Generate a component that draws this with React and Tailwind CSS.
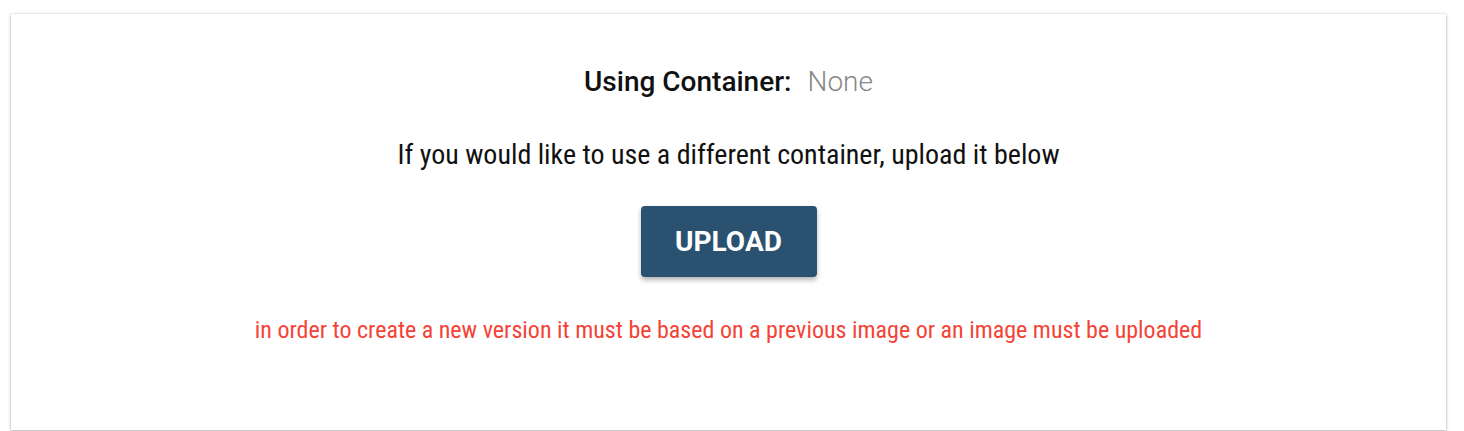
import React from 'react';

const App = () => {
    return (
        <div className="pl-[11px] pt-[14px] pb-px bg-white min-h-[431px]" style={{ fontFamily: 'Roboto, sans-serif' }}>
            <div className="w-[1435px] h-[416px] bg-white shadow-[0_1px_3px_rgba(0,0,0,0.3),0_0_2px_rgba(0,0,0,0.12)] flex flex-col items-center">
                <div className="mt-[52px] flex items-baseline text-[28px] leading-[32px]">
                    <span className="font-medium text-[#111]">Using Container:</span>
                    <span className="ml-[16px] font-light text-[#888]">None</span>
                </div>
                <p className="mt-[41px] text-[28px] leading-[32px] text-[#111] [font-stretch:condensed]" style={{ fontFamily: '"Roboto Condensed", "Liberation Sans Narrow", Roboto, sans-serif' }}>
                    If you would like to use a different container, upload it below
                </p>
                <button className="mt-[35px] w-[176px] h-[71px] rounded bg-[#2a5270] text-white text-[28px] font-bold shadow-[0_3px_5px_rgba(0,0,0,0.3)]">
                    UPLOAD
                </button>
                <p className="mt-[37px] text-[24px] leading-[32px] text-[#f44336] [font-stretch:condensed]" style={{ fontFamily: '"Roboto Condensed", "Liberation Sans Narrow", Roboto, sans-serif' }}>
                    in order to create a new version it must be based on a previous image or an image must be uploaded
                </p>
            </div>
        </div>
    );
};

export default App;
